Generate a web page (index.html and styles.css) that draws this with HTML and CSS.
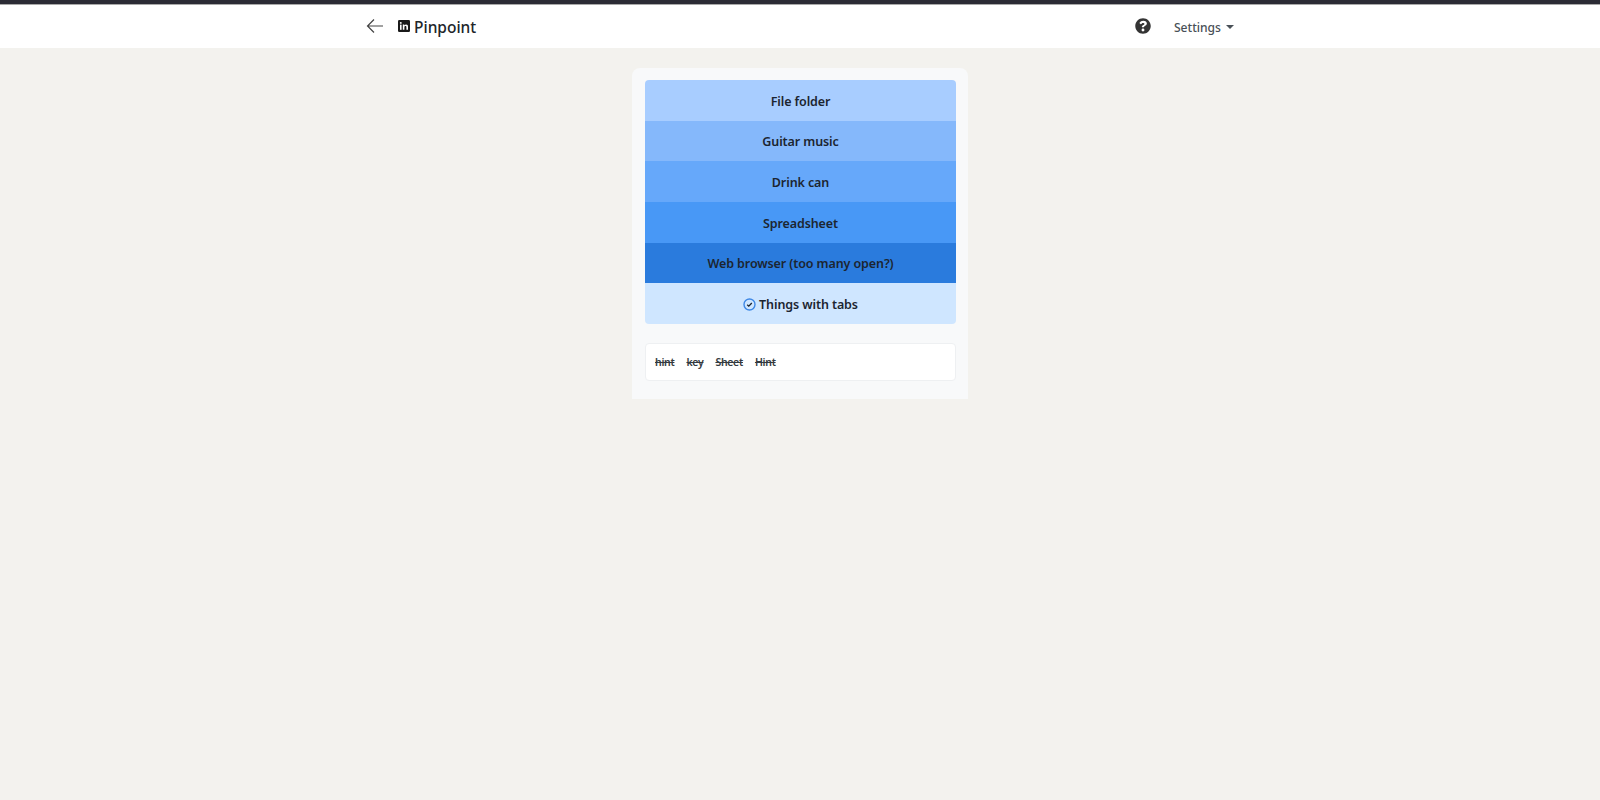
FILE: index.html
```html
<!DOCTYPE html>
<html lang="en">
<head>
<meta charset="utf-8">
<title>Pinpoint</title>
<link rel="stylesheet" href="styles.css">
</head>
<body>
<div class="topline"></div>
<header class="nav">
  <div class="nav-inner">
    <a class="back" aria-label="Back">
      <svg width="18" height="16" viewBox="0 0 18 16"><path d="M17 8H1.500M8 1.500L1.500 8L8 14.500" fill="none" stroke="#444" stroke-width="1.200"/></svg>
    </a>
    <svg class="li" width="12" height="12" viewBox="0 0 12 12"><rect width="12" height="12" rx="1.200" fill="#1a1a1a"/><rect x="2" y="4.600" width="1.600" height="5.200" fill="#fff"/><circle cx="2.800" cy="2.900" r="0.950" fill="#fff"/><path d="M4.800 4.600h1.500v.8c.4-.6 1-.95 1.800-.95 1.300 0 1.900.85 1.900 2.300v3.050H8.400V7.100c0-.7-.25-1.200-.9-1.200-.7 0-1.100.5-1.100 1.250v2.650H4.800z" fill="#fff"/></svg>
    <span class="brand">Pinpoint</span>
    <div class="spacer"></div>
    <svg class="help" width="16" height="16" viewBox="0 0 512 512"><path fill="#343434" d="M504 256c0 137-111 248-248 248S8 393 8 256 119 8 256 8s248 111 248 248zM262.700 90c-54.500 0-89.300 23-116.600 63.800-3.500 5.300-2.400 12.400 2.700 16.300l34.700 26.300c5.200 3.900 12.600 3 16.700-2.100 17.900-22.700 30.100-35.800 57.300-35.800 20.400 0 45.700 13.100 45.700 33 0 15-12.400 22.700-32.600 34-23.600 13.200-54.800 29.700-54.800 70.900V280c0 6.600 5.400 12 12 12h56c6.600 0 12-5.400 12-12v-1.300c0-28.600 83.500-29.800 83.500-107.100C378.700 133.100 339.200 90 262.700 90zM256 338c-25.500 0-46.200 20.700-46.200 46.200s20.700 46.200 46.200 46.200 46.200-20.700 46.200-46.200S281.500 338 256 338z"/></svg>
    <span class="settings">Settings</span>
    <span class="caret"></span>
  </div>
</header>
<main class="page">
  <section class="card">
    <div class="list">
      <div class="row row-1">File folder</div>
      <div class="row row-2">Guitar music</div>
      <div class="row row-3">Drink can</div>
      <div class="row row-4">Spreadsheet</div>
      <div class="row row-5">Web browser (too many open?)</div>
      <div class="row row-6">
        <svg class="check" width="13" height="13" viewBox="0 0 13 13"><circle cx="6.500" cy="6.500" r="5.500" fill="none" stroke="#3f88e6" stroke-width="1.400"/><path d="M4.200 6.700L5.800 8.200L8.800 5" fill="none" stroke="#1c2530" stroke-width="1.300"/></svg>
        <span>Things with tabs</span>
      </div>
    </div>
    <div class="hints">
      <s>hint</s><s>key</s><s>Sheet</s><s>Hint</s>
    </div>
  </section>
</main>
</body>
</html>
```
FILE: styles.css
```css
* { box-sizing: border-box; }
html, body { margin: 0; height: 100%; }
body {
  background: #f3f2ee;
  font-family: "Noto Sans", "Open Sans", sans-serif;
  color: #212529;
}
.topline {
  height: 5px;
  background: #2b2b35;
  border-bottom: 1px solid #a9a9a9;
}
.nav {
  height: 43px;
  background: #fff;
}
.nav-inner {
  width: 880px;
  margin: 0 auto;
  height: 100%;
  display: flex;
  align-items: center;
  padding-left: 6px;
}
.back { display: flex; margin-right: 14px; margin-top: -1px; }
.li { margin-right: 4px; margin-top: -1px; }
.brand { font-size: 15.500px; font-weight: 500; color: #212529; }
.spacer { flex: 1; }
.help { margin-right: 23px; margin-top: -1px; }
.settings { font-size: 12.100px; font-weight: 500; color: #495057; margin-top: 1px; }
.caret {
  margin-left: 5px;
  margin-right: 6px;
  border-top: 4px solid #495057;
  border-left: 4px solid transparent;
  border-right: 4px solid transparent;
}
.page {
  display: flex;
  justify-content: center;
  padding-top: 20px;
}
.card {
  width: 336px;
  height: 331px;
  background: #f8f9fa;
  border-radius: 8px 8px 0 0;
  padding: 12px 12px 0 13px;
}
.list {
  border-radius: 4px;
  overflow: hidden;
}
.row {
  height: 40.670px;
  padding-top: 2px;
  display: flex;
  align-items: center;
  justify-content: center;
  gap: 3px;
  font-size: 12.500px;
  font-weight: 600;
  letter-spacing: -0.100px;
  color: #1c2530;
}
.row-1 { background: #a8cdff; }
.row-2 { background: #85b8fb; }
.row-3 { background: #66a8fa; }
.row-4 { background: #4898f6; }
.row-5 { background: #2a7bdd; }
.row-6 { background: #cfe6ff; padding-top: 1px; }
.hints {
  margin-top: 19px;
  height: 38px;
  background: #fff;
  border: 1px solid #eef0f2;
  border-radius: 4px;
  display: flex;
  align-items: center;
  gap: 12px;
  padding-left: 9px;
  font-size: 10.500px;
  font-weight: 600;
  letter-spacing: -0.300px;
  color: #343a40;
}
```
